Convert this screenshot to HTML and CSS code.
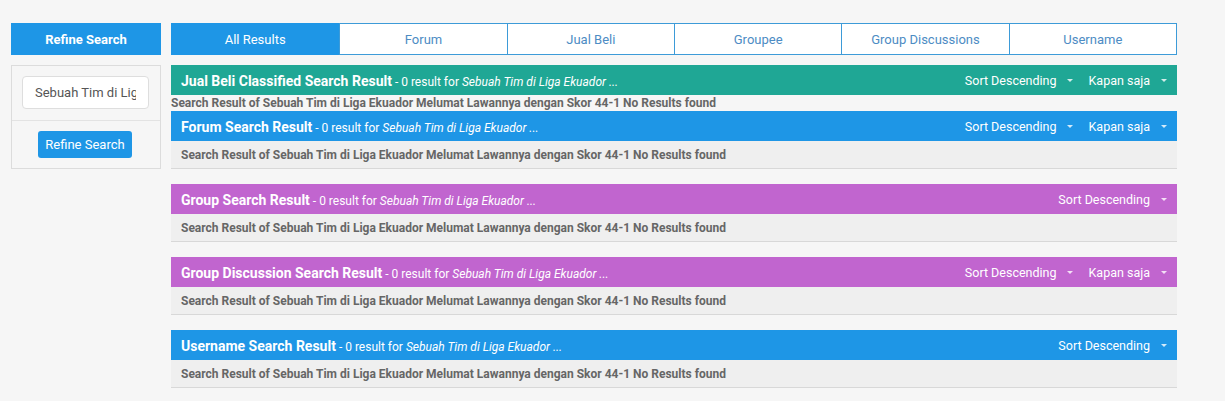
FILE: index.html
```html
<!DOCTYPE html>
<html>
<head>
<meta charset="utf-8">
<link rel="stylesheet" href="styles.css">
</head>
<body>
<div class="page">
  <aside class="sidebar">
    <div class="side-head">Refine Search</div>
    <div class="side-box">
      <div class="side-field"><input class="side-input" type="text" value="Sebuah Tim di Liga Ekuador Melumat Lawannya dengan Skor 44-1"></div>
      <div class="side-action"><button class="side-btn">Refine Search</button></div>
    </div>
  </aside>
  <main class="main">
    <nav class="tabs">
      <div class="tab active">All Results</div>
      <div class="tab">Forum</div>
      <div class="tab">Jual Beli</div>
      <div class="tab">Groupee</div>
      <div class="tab">Group Discussions</div>
      <div class="tab">Username</div>
    </nav>

    <section class="result flat">
      <div class="res-head teal">
        <div class="res-title"><b>Jual Beli Classified Search Result</b><span class="sub"> - 0 result for <i>Sebuah Tim di Liga Ekuador ...</i></span></div>
        <div class="res-tools"><span class="tool">Sort Descending<span class="caret"></span></span><span class="tool">Kapan saja<span class="caret"></span></span></div>
      </div>
      <div class="res-body plain">Search Result of Sebuah Tim di Liga Ekuador Melumat Lawannya dengan Skor 44-1 No Results found</div>
    </section>

    <section class="result">
      <div class="res-head blue">
        <div class="res-title"><b>Forum Search Result</b><span class="sub"> - 0 result for <i>Sebuah Tim di Liga Ekuador ...</i></span></div>
        <div class="res-tools"><span class="tool">Sort Descending<span class="caret"></span></span><span class="tool">Kapan saja<span class="caret"></span></span></div>
      </div>
      <div class="res-body">Search Result of Sebuah Tim di Liga Ekuador Melumat Lawannya dengan Skor 44-1 No Results found</div>
    </section>

    <section class="result">
      <div class="res-head purple">
        <div class="res-title"><b>Group Search Result</b><span class="sub"> - 0 result for <i>Sebuah Tim di Liga Ekuador ...</i></span></div>
        <div class="res-tools"><span class="tool">Sort Descending<span class="caret"></span></span></div>
      </div>
      <div class="res-body">Search Result of Sebuah Tim di Liga Ekuador Melumat Lawannya dengan Skor 44-1 No Results found</div>
    </section>

    <section class="result">
      <div class="res-head purple">
        <div class="res-title"><b>Group Discussion Search Result</b><span class="sub"> - 0 result for <i>Sebuah Tim di Liga Ekuador ...</i></span></div>
        <div class="res-tools"><span class="tool">Sort Descending<span class="caret"></span></span><span class="tool">Kapan saja<span class="caret"></span></span></div>
      </div>
      <div class="res-body">Search Result of Sebuah Tim di Liga Ekuador Melumat Lawannya dengan Skor 44-1 No Results found</div>
    </section>

    <section class="result">
      <div class="res-head blue">
        <div class="res-title"><b>Username Search Result</b><span class="sub"> - 0 result for <i>Sebuah Tim di Liga Ekuador ...</i></span></div>
        <div class="res-tools"><span class="tool">Sort Descending<span class="caret"></span></span></div>
      </div>
      <div class="res-body">Search Result of Sebuah Tim di Liga Ekuador Melumat Lawannya dengan Skor 44-1 No Results found</div>
    </section>
  </main>
</div>
</body>
</html>
```

FILE: styles.css
```css
* { box-sizing: border-box; }
html, body { margin: 0; padding: 0; }
body {
  background: #f6f6f6;
  font-family: Roboto, "Liberation Sans", Arial, sans-serif;
  color: #555;
}
.page {
  display: flex;
  gap: 10px;
  padding: 23px 0 0 11px;
}
.sidebar {
  width: 150px;
  flex: none;
  display: flex;
  flex-direction: column;
  gap: 10px;
}
.side-head {
  height: 32px;
  background: #1e96e6;
  color: #fff;
  font-weight: 700;
  font-size: 13px;
  display: flex;
  align-items: center;
  justify-content: center;
}
.side-box {
  border: 1px solid #dcdcdc;
  background: #f6f6f6;
}
.side-field {
  padding: 10px 11px 11px 10px;
  border-bottom: 1px solid #e3e3e3;
}
.side-input {
  display: block;
  width: 100%;
  height: 33px;
  border: 1px solid #dedede;
  border-radius: 4px;
  background: #fff;
  padding: 0 12px;
  font-family: Roboto, "Liberation Sans", Arial, sans-serif;
  font-size: 13px;
  color: #555;
  outline: none;
}
.side-action {
  padding: 10px 0 10px;
  display: flex;
  justify-content: center;
}
.side-btn {
  width: 94px;
  height: 27px;
  margin-right: 2px;
  border: 0;
  border-radius: 3px;
  background: #1e96e6;
  color: #fff;
  font-family: Roboto, "Liberation Sans", Arial, sans-serif;
  font-size: 13px;
  padding: 0;
}
.main {
  width: 1006px;
  flex: none;
  display: flex;
  flex-direction: column;
}
.tabs {
  display: grid;
  grid-template-columns: repeat(6, 1fr);
  height: 32px;
  border: 1px solid #3d9bd8;
  background: #fff;
  margin-bottom: 10px;
}
.tab {
  display: flex;
  align-items: center;
  justify-content: center;
  font-size: 13px;
  color: #4d8cc4;
  border-left: 1px solid #3d9bd8;
}
.tab:first-child { border-left: 0; }
.tab.active {
  background: #1e96e6;
  color: #fff;
  margin: -1px 0 -1px -1px;
}
.result { margin-bottom: 15px; }
.result.flat { margin-bottom: 0; }
.res-head {
  height: 30px;
  display: flex;
  align-items: center;
  justify-content: space-between;
  padding: 0 10px;
  color: #fff;
}
.teal { background: #1fa795; }
.blue { background: #1e96e6; }
.purple { background: #c165cf; }
.res-title b { font-size: 14px; font-weight: 700; }
.res-title .sub { font-size: 12px; }
.res-title i { font-style: italic; }
.res-tools {
  display: flex;
  gap: 15px;
  font-size: 12.5px;
}
.tool {
  display: flex;
  align-items: center;
}
.caret {
  display: inline-block;
  width: 0;
  height: 0;
  margin-left: 11px;
  border-left: 3px solid transparent;
  border-right: 3px solid transparent;
  border-top: 3px solid rgba(255,255,255,0.8);
}
.res-body {
  height: 28px;
  background: #efefef;
  border-bottom: 1px solid #d8d8d8;
  padding: 0 10px;
  display: flex;
  align-items: center;
  font-size: 12px;
  font-weight: 700;
  color: #666;
}
.res-body.plain {
  height: 16px;
  padding: 0;
  background: transparent;
  border-bottom: 0;
}
```
